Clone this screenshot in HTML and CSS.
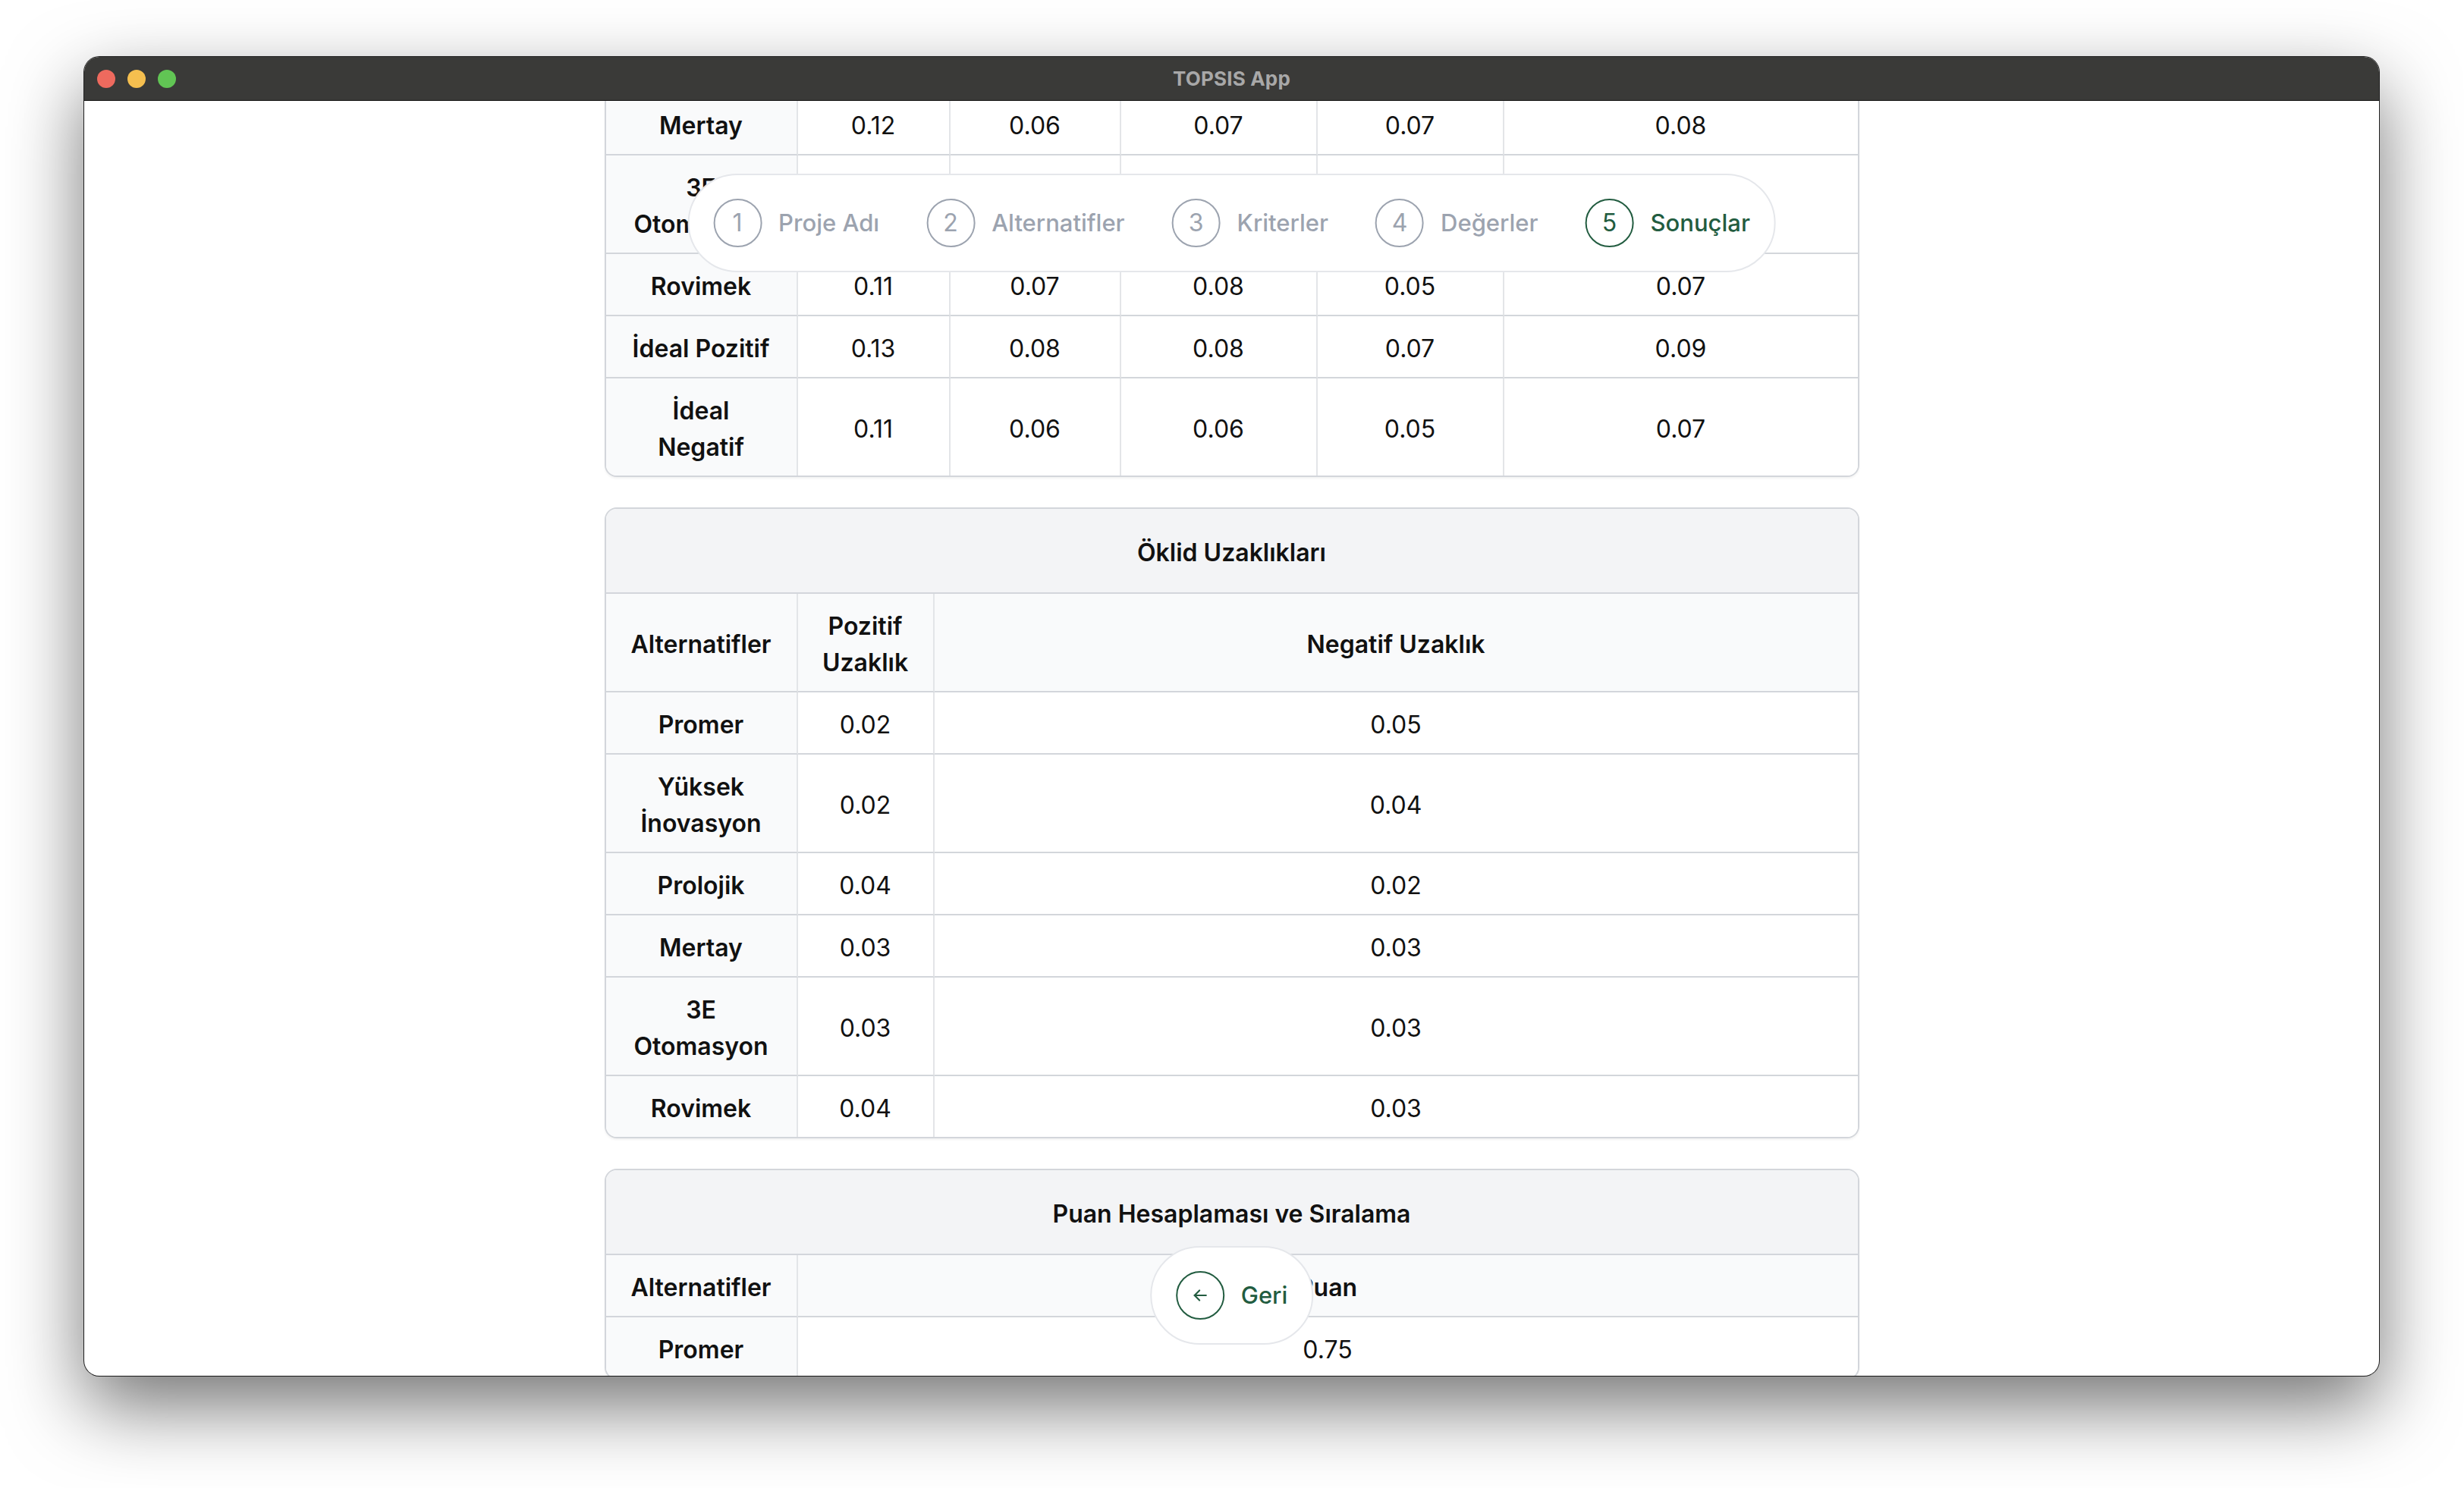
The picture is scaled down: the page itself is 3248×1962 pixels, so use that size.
FILE: index.html
```html
<!DOCTYPE html>
<html lang="tr">
<head>
<meta charset="utf-8">
<title>TOPSIS App</title>
<link rel="stylesheet" href="styles.css">
</head>
<body>
<div class="window">
  <header class="titlebar">
    <div class="lights">
      <span class="light light-red"></span>
      <span class="light light-yellow"></span>
      <span class="light light-green"></span>
    </div>
    <div class="title">TOPSIS App</div>
  </header>

  <main class="content">
    <div class="stack">
      <section class="card card-cut">
        <table class="tbl">
          <colgroup>
            <col class="col-name"><col class="col-m1"><col class="col-m2"><col class="col-m3"><col class="col-m4"><col>
          </colgroup>
          <tbody>
            <tr><th>Mertay</th><td>0.12</td><td>0.06</td><td>0.07</td><td>0.07</td><td>0.08</td></tr>
            <tr><th>3E Otomasyon</th><td>0.12</td><td>0.07</td><td>0.07</td><td>0.06</td><td>0.08</td></tr>
            <tr><th>Rovimek</th><td>0.11</td><td>0.07</td><td>0.08</td><td>0.05</td><td>0.07</td></tr>
            <tr><th>İdeal Pozitif</th><td>0.13</td><td>0.08</td><td>0.08</td><td>0.07</td><td>0.09</td></tr>
            <tr><th>İdeal Negatif</th><td>0.11</td><td>0.06</td><td>0.06</td><td>0.05</td><td>0.07</td></tr>
          </tbody>
        </table>
      </section>

      <section class="card">
        <div class="card-title">Öklid Uzaklıkları</div>
        <table class="tbl">
          <colgroup>
            <col class="col-name"><col class="col-pos"><col>
          </colgroup>
          <thead>
            <tr><th>Alternatifler</th><th>Pozitif Uzaklık</th><th>Negatif Uzaklık</th></tr>
          </thead>
          <tbody>
            <tr><th>Promer</th><td>0.02</td><td>0.05</td></tr>
            <tr><th>Yüksek İnovasyon</th><td>0.02</td><td>0.04</td></tr>
            <tr><th>Prolojik</th><td>0.04</td><td>0.02</td></tr>
            <tr><th>Mertay</th><td>0.03</td><td>0.03</td></tr>
            <tr><th>3E Otomasyon</th><td>0.03</td><td>0.03</td></tr>
            <tr><th>Rovimek</th><td>0.04</td><td>0.03</td></tr>
          </tbody>
        </table>
      </section>

      <section class="card">
        <div class="card-title">Puan Hesaplaması ve Sıralama</div>
        <table class="tbl">
          <colgroup>
            <col class="col-name"><col>
          </colgroup>
          <thead>
            <tr><th>Alternatifler</th><th>Puan</th></tr>
          </thead>
          <tbody>
            <tr><th>Promer</th><td>0.75</td></tr>
          </tbody>
        </table>
      </section>
    </div>
  </main>

  <nav class="pill stepper">
    <div class="step"><span class="step-num">1</span><span class="step-label">Proje Adı</span></div>
    <div class="step"><span class="step-num">2</span><span class="step-label">Alternatifler</span></div>
    <div class="step"><span class="step-num">3</span><span class="step-label">Kriterler</span></div>
    <div class="step"><span class="step-num">4</span><span class="step-label">Değerler</span></div>
    <div class="step step-active"><span class="step-num">5</span><span class="step-label">Sonuçlar</span></div>
  </nav>

  <div class="pill backbar">
    <div class="step step-active">
      <span class="step-num">
        <svg class="arrow" viewBox="0 0 24 24" width="26" height="26" fill="none" stroke="currentColor" stroke-width="2" stroke-linecap="round" stroke-linejoin="round"><path d="M19 12H5"/><path d="M11 18l-6-6 6-6"/></svg>
      </span>
      <span class="step-label">Geri</span>
    </div>
  </div>
</div>
</body>
</html>
```

FILE: styles.css
```css
* { box-sizing: border-box; }

html, body {
  margin: 0;
  padding: 0;
  background: #ffffff;
}

body {
  width: 3248px;
  height: 1962px;
  overflow: hidden;
  font-family: "Inter", "Noto Sans", sans-serif;
  color: #111111;
}

.window {
  position: relative;
  margin: 75px 0 0 111px;
  width: 3025px;
  height: 1739px;
  border-radius: 20px;
  background: #ffffff;
  overflow: hidden;
  display: flex;
  flex-direction: column;
  box-shadow: 0 0 0 1px rgba(0, 0, 0, 0.85), 0 40px 100px rgba(0, 0, 0, 0.55);
}

.titlebar {
  position: relative;
  flex: 0 0 auto;
  height: 58px;
  background: #3a3a38;
  border-bottom: 1px solid #121212;
  display: flex;
  align-items: center;
  justify-content: center;
}

.lights {
  position: absolute;
  left: 17px;
  top: 17px;
  display: flex;
  gap: 16px;
}

.light {
  width: 24px;
  height: 24px;
  border-radius: 50%;
  display: block;
}
.light-red { background: #ee6a5e; }
.light-yellow { background: #f5bf4f; }
.light-green { background: #61c554; }

.title {
  font-family: "Inter", "Liberation Sans", sans-serif;
  font-weight: 700;
  font-size: 26px;
  color: #a8a8a8;
  letter-spacing: 0.2px;
}

.content {
  flex: 1 1 auto;
  overflow: hidden;
}

.stack {
  width: 1654px;
  margin: 0 auto;
  display: flex;
  flex-direction: column;
  gap: 40px;
}

.card {
  border: 2px solid #d3d6db;
  border-radius: 16px;
  overflow: hidden;
  background: #ffffff;
  box-shadow: 0 2px 3px rgba(0, 0, 0, 0.05);
}

.card-cut {
  margin-top: -12px;
  border-top-left-radius: 0;
  border-top-right-radius: 0;
}

.card-title {
  background: #f3f4f6;
  padding: 34px 32px 28px;
  text-align: center;
  font-size: 32px;
  line-height: 48px;
  font-weight: 600;
  border-bottom: 2px solid #d3d6db;
}

.tbl {
  width: 100%;
  table-layout: fixed;
  border-collapse: separate;
  border-spacing: 0;
  font-size: 32px;
  line-height: 48px;
}

.col-name { width: 253px; }
.col-m1 { width: 201px; }
.col-m2 { width: 225px; }
.col-m3 { width: 259px; }
.col-m4 { width: 246px; }
.col-pos { width: 180px; }

.tbl th,
.tbl td {
  padding: 19px 32px 13px;
  text-align: center;
  vertical-align: middle;
  border-right: 2px solid #e3e5e8;
  border-bottom: 2px solid #d3d6db;
}

.tbl th:last-child,
.tbl td:last-child {
  border-right: none;
}

.tbl tbody tr:last-child th,
.tbl tbody tr:last-child td {
  border-bottom: none;
}

.tbl th {
  font-weight: 600;
  background: #f9fafb;
}

.tbl td {
  font-weight: 400;
  background: #ffffff;
}

.tbl thead th {
  background: #f9fafb;
}

.pill {
  position: absolute;
  left: 50%;
  transform: translateX(-50%);
  display: flex;
  align-items: center;
  gap: 62px;
  padding: 31px 32px;
  background: #ffffff;
  border: 2px solid #e5e7eb;
  border-radius: 999px;
}

.stepper { top: 154px; }
.backbar { bottom: 41px; }

.step {
  display: flex;
  align-items: center;
  gap: 22px;
  color: #9ca3af;
  white-space: nowrap;
}

.step-num {
  width: 64px;
  height: 64px;
  border-radius: 50%;
  border: 2px solid currentColor;
  display: flex;
  align-items: center;
  justify-content: center;
  font-size: 32px;
  font-weight: 400;
  line-height: 1;
}

.step-label {
  font-size: 31px;
  font-weight: 500;
  line-height: 48px;
}

.step-active { color: #225c40; }

.arrow { display: block; }
```
